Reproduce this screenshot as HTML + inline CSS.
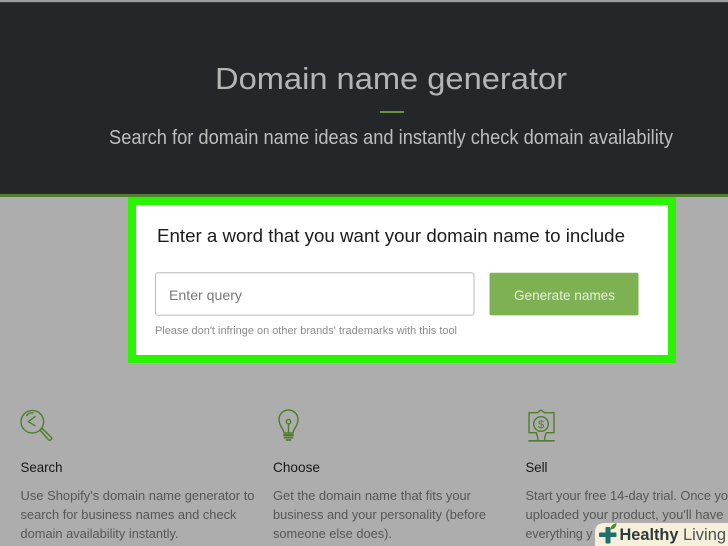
<!DOCTYPE html>
<html lang="en"><head><meta charset="utf-8"><title>Domain name generator</title>
<style>
html,body{margin:0;padding:0;width:728px;height:546px;overflow:hidden;background:#adadad}
svg{display:block;position:absolute;left:0;top:0}
text{font-family:"Liberation Sans",sans-serif}
</style></head><body>
<svg width="728" height="546" viewBox="0 0 728 546" xmlns="http://www.w3.org/2000/svg">
<rect width="728" height="546" fill="#adadad"/>
<rect width="728" height="2" fill="#9a9c9d"/>
<rect y="2" width="728" height="1" fill="#3a3d40"/>
<rect y="3" width="728" height="191" fill="#23272a"/>
<rect y="194" width="728" height="3" fill="#537d30"/>
<text x="215" y="89" font-size="31" fill="#b4b5b5" textLength="352" lengthAdjust="spacingAndGlyphs">Domain name generator</text>
<rect x="380" y="111" width="24" height="2" fill="#6b9140"/>
<text x="109" y="144" font-size="20" fill="#bdbebe" textLength="564" lengthAdjust="spacingAndGlyphs">Search for domain name ideas and instantly check domain availability</text>

<rect x="128" y="197" width="548" height="166" fill="#2bf400"/>
<rect x="136" y="205" width="532" height="150" fill="#ffffff"/>
<text x="157" y="242" font-size="18.5" fill="#1c1c1c" textLength="468" lengthAdjust="spacingAndGlyphs">Enter a word that you want your domain name to include</text>
<rect x="155.500" y="272.800" width="318.500" height="42.500" rx="2.500" fill="#fff" stroke="#bbbbbb" stroke-width="1"/>
<text x="169" y="300" font-size="14" fill="#77797b" textLength="73" lengthAdjust="spacingAndGlyphs">Enter query</text>
<rect x="489.500" y="272.700" width="149" height="42.700" rx="2" fill="#7db152"/>
<text x="514" y="300" font-size="14" fill="#e6f0dc" textLength="101" lengthAdjust="spacingAndGlyphs">Generate names</text>
<text x="155" y="334" font-size="11" fill="#8b8b8b" textLength="302" lengthAdjust="spacingAndGlyphs">Please don't infringe on other brands' trademarks with this tool</text>

<g fill="none" stroke="#4f7d2d" stroke-width="1.400" stroke-linecap="round" stroke-linejoin="round">
<!-- search -->
<circle cx="32.300" cy="421.700" r="11.300"/>
<path d="M26.500 415.500a8 8 0 0 1 6.500-2.800"/>
<path d="M35 416.700l-6.700 5 6.700 4"/>
<path d="M40 430l2-1.800 9.500 9.300c1 1.600-1 3.300-2.600 2.600z"/>
<!-- bulb -->
<path d="M284 433c0-4-5-6.500-5-13.500a9.500 9.500 0 0 1 19 0c0 7-5 9.500-5 13.500z"/>
<circle cx="288.500" cy="421.700" r="2.200"/>
<path d="M288.500 424v9"/>
<path d="M284 435h9M284.500 437.500h8" stroke-width="2"/>
<path d="M286.500 440h4" stroke-width="1.800"/>
<!-- sell -->
<path d="M536.500 432.700h-7.500v-20h8.500l3.500-2.700 3.500 2.700h9.500v20h-7.500"/>
<path d="M536 432.700c1 2 2 5 2 8M546.500 432.700c-1 2-2 5-2 8"/>
<path d="M529 440.800h25" stroke-width="1.600"/>
<circle cx="541" cy="424" r="7.300"/>
</g>
<text x="541" y="428" font-size="11" fill="#4f7d2d" text-anchor="middle">$</text>

<text x="20.500" y="472" font-size="14" fill="#171717" textLength="42" lengthAdjust="spacingAndGlyphs">Search</text>
<text x="273" y="472" font-size="14" fill="#171717" textLength="47" lengthAdjust="spacingAndGlyphs">Choose</text>
<text x="525.500" y="472" font-size="14" fill="#171717" textLength="22" lengthAdjust="spacingAndGlyphs">Sell</text>

<g font-size="12.500" fill="#565656">
<text x="20.500" y="500" textLength="234" lengthAdjust="spacingAndGlyphs">Use Shopify's domain name generator to</text>
<text x="20.500" y="519" textLength="216" lengthAdjust="spacingAndGlyphs">search for business names and check</text>
<text x="20.500" y="538" textLength="158" lengthAdjust="spacingAndGlyphs">domain availability instantly.</text>
<text x="273" y="500" textLength="198" lengthAdjust="spacingAndGlyphs">Get the domain name that fits your</text>
<text x="273" y="519" textLength="213" lengthAdjust="spacingAndGlyphs">business and your personality (before</text>
<text x="273" y="538" textLength="119" lengthAdjust="spacingAndGlyphs">someone else does).</text>
<text x="525.500" y="500" textLength="202.500" lengthAdjust="spacingAndGlyphs">Start your free 14-day trial. Once yo</text>
<text x="525.500" y="519" textLength="198" lengthAdjust="spacingAndGlyphs">uploaded your product, you'll have</text>
<text x="525.500" y="538" textLength="67" lengthAdjust="spacingAndGlyphs">everything y</text>
</g>

<path d="M595 546v-14q0-9 10-9h123v23z" fill="#f6efd9"/>
<rect x="605.500" y="527" width="5" height="16.500" rx="1" fill="#1f6f6e"/>
<rect x="599" y="532.500" width="17.500" height="4.500" rx="1" fill="#1f6f6e"/>
<path d="M610.500 529.500q0-5 6-6.500q0 6-6 6.500z" fill="#4f8a2e"/>
<text x="619.500" y="540" font-size="17" font-weight="bold" fill="#2e3a3c" textLength="59" lengthAdjust="spacingAndGlyphs">Healthy</text>
<text x="683" y="540" font-size="17" fill="#4a5354" textLength="43" lengthAdjust="spacingAndGlyphs">Living</text>
</svg>
</body></html>
